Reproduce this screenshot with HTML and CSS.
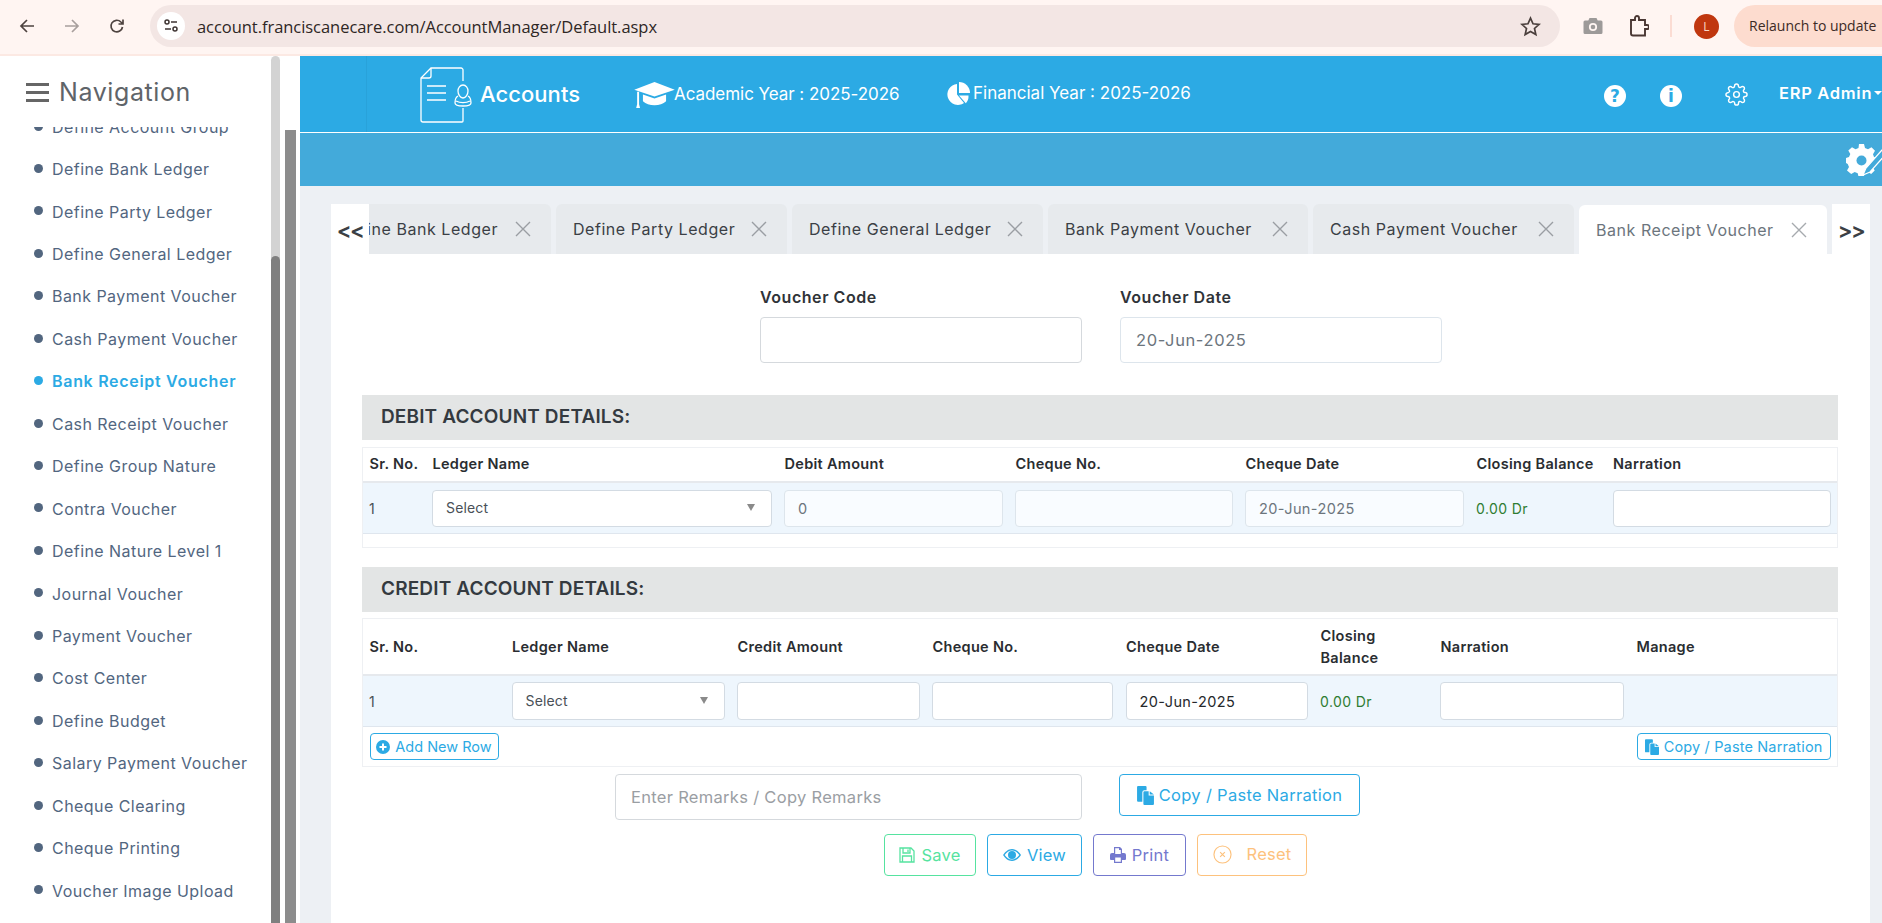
FILE: index.html
```html
<!DOCTYPE html>
<html lang="en">
<head>
<meta charset="utf-8">
<title>Accounts</title>
<link rel="stylesheet" href="styles.css">
</head>
<body>
<div class="chrome">
  <svg class="ci back" viewBox="0 0 16 16"><path d="M15 8H2M8 2L2 8l6 6"/></svg>
  <svg class="ci fwd" viewBox="0 0 16 16"><path d="M1 8h13M8 2l6 6-6 6"/></svg>
  <svg class="ci reload" viewBox="0 0 16 16"><path d="M13.5 9a5.8 5.8 0 1 1-1.6-5L14 6M14 1.5V6H9.5"/></svg>
  <div class="omni">
    <span class="tune"><svg viewBox="0 0 16 16"><circle cx="4" cy="4" r="2"/><path d="M8 4h6M2 11h6"/><circle cx="12" cy="11" r="2"/></svg></span>
    <span class="url">account.franciscanecare.com/AccountManager/Default.aspx</span>
    <svg class="star" viewBox="0 0 20 20"><path d="M10 2l2.4 5.4 5.8.6-4.4 3.9 1.3 5.8L10 14.700l-5.100 3 1.300-5.800L1.800 8l5.800-.6z"/></svg>
  </div>
  <svg class="cam" viewBox="0 0 20 18"><path d="M6.500 1h7l1.200 2.500H18a1.500 1.500 0 0 1 1.500 1.500v10.500A1.500 1.500 0 0 1 18 17H2a1.500 1.500 0 0 1-1.500-1.500V5A1.500 1.500 0 0 1 2 3.500h3.300z"/><circle cx="10" cy="10" r="3.200" class="camhole"/></svg>
  <svg class="puzzle" viewBox="0 0 20 22"><path d="M2 5h4V3a2 2 0 0 1 4 0v2h6v5h2a2 2 0 0 1 0 4h-2v6.500H4a2 2 0 0 1-2-2z"/></svg>
  <span class="csep"></span>
  <span class="avatar">L</span>
  <span class="relaunch">Relaunch to update</span>
</div>

<div class="app">
  <aside class="sidebar">
    <div class="navhead">
      <span class="burger"><i></i><i></i><i></i></span>
      <span class="navtitle">Navigation</span>
    </div>
    <div class="navclip">
      <ul class="navlist">
        <li>Define Account Group</li>
        <li>Define Bank Ledger</li>
        <li>Define Party Ledger</li>
        <li>Define General Ledger</li>
        <li>Bank Payment Voucher</li>
        <li>Cash Payment Voucher</li>
        <li class="active">Bank Receipt Voucher</li>
        <li>Cash Receipt Voucher</li>
        <li>Define Group Nature</li>
        <li>Contra Voucher</li>
        <li>Define Nature Level 1</li>
        <li>Journal Voucher</li>
        <li>Payment Voucher</li>
        <li>Cost Center</li>
        <li>Define Budget</li>
        <li>Salary Payment Voucher</li>
        <li>Cheque Clearing</li>
        <li>Cheque Printing</li>
        <li>Voucher Image Upload</li>
      </ul>
    </div>
  </aside>
  <div class="sbar1"><div class="sbar1-thumb"></div></div>
  <div class="sbar2gap"><div class="sbar2"></div></div>

  <main class="main">
    <header class="topbar">
      <div class="brandcell"></div>
      <svg class="logo" viewBox="0 0 52 56"><path d="M43 14V3a2 2 0 0 0-2-2H11L1 11v42a2 2 0 0 0 2 2h39a1 1 0 0 0 1-1V41"/><path d="M11 1v8a2 2 0 0 1-2 2H1"/><path d="M7 19h19M7 26h19M7 33h19"/><path d="M43 18c3 0 5 3 5 6s-2 7-5 7-5-4-5-7 2-6 5-6zM38 29c-2 1-3 3-3 7 0 2 3 3 8 3s8-1 8-3c0-4-1-6-3-7M36 34c4 2 10 2 14 0"/></svg>
      <span class="brand">Accounts</span>
      <svg class="cap" viewBox="0 0 42 28"><path d="M21 0L42 8 21 15 0 8zM9 13l12 4 12-4v7c-3 3-7 4-12 4s-9-1-12-4z"/><path d="M3 10h2v13l1 4H2l1-4z"/></svg>
      <span class="year">Academic Year : 2025-2026</span>
      <svg class="pie" viewBox="0 0 24 24"><path d="M11 2v10.500l7 8.500A10.500 10.500 0 1 1 11 2z"/><path d="M13 0a11 11 0 0 1 11 11H13z"/><path d="M13 13.500l6.800 7.800a10.500 10.500 0 0 0 2.700-7.800z"/></svg>
      <span class="year fin">Financial Year : 2025-2026</span>
      <svg class="hic help" viewBox="0 0 22 22"><circle cx="11" cy="11" r="11"/><text x="11" y="16.500" class="hictext">?</text></svg>
      <svg class="hic info" viewBox="0 0 22 22"><circle cx="11" cy="11" r="11"/><text x="11" y="17" class="hictext">i</text></svg>
      <svg class="gearo" viewBox="0 0 24 24"><circle cx="12" cy="12" r="3"/><path d="M19.400 15a1.650 1.650 0 0 0 .33 1.820l.06.06a2 2 0 0 1 0 2.830 2 2 0 0 1-2.830 0l-.06-.06a1.650 1.650 0 0 0-1.820-.33 1.650 1.650 0 0 0-1 1.510V21a2 2 0 0 1-2 2 2 2 0 0 1-2-2v-.09A1.650 1.650 0 0 0 9 19.400a1.650 1.650 0 0 0-1.820.33l-.06.06a2 2 0 0 1-2.830 0 2 2 0 0 1 0-2.830l.06-.06a1.650 1.650 0 0 0 .33-1.820 1.650 1.650 0 0 0-1.510-1H3a2 2 0 0 1-2-2 2 2 0 0 1 2-2h.09A1.650 1.650 0 0 0 4.600 9a1.650 1.650 0 0 0-.33-1.820l-.06-.06a2 2 0 0 1 0-2.830 2 2 0 0 1 2.830 0l.06.06a1.650 1.650 0 0 0 1.820.33H9a1.650 1.650 0 0 0 1-1.510V3a2 2 0 0 1 2-2 2 2 0 0 1 2 2v.09a1.650 1.650 0 0 0 1 1.510 1.650 1.650 0 0 0 1.820-.33l.06-.06a2 2 0 0 1 2.830 0 2 2 0 0 1 0 2.830l-.06.06a1.650 1.650 0 0 0-.33 1.820V9a1.650 1.650 0 0 0 1.510 1H21a2 2 0 0 1 2 2 2 2 0 0 1-2 2h-.09a1.650 1.650 0 0 0-1.510 1z"/></svg>
      <span class="user">ERP Admin</span>
      <span class="caret"></span>
    </header>
    <div class="band">
      <svg class="bandic" viewBox="0 0 36 32"><path class="bg" d="M13 0h5l1 4 3 1.300 3.500-2 3.500 3.500-2 3.500L28 13l4 1v5l-4 1-1.300 3 2 3.500-3.500 3.500-3.500-2-3 1.300-1 4h-5l-1-4-3-1.300-3.500 2L1 26.500l2-3.500L1.700 20 0 19v-5l3-1 1.300-3-2-3.500L6 3.300l3.500 2 3-1.300z"/><circle class="bh" cx="15.500" cy="16.500" r="5"/><path class="bp" d="M36 6L20 24l-3 7 7-3L40 10z"/></svg>
    </div>

    <div class="content">
      <section class="card">
        <div class="tabs">
          <div class="arrow">&lt;&lt;</div>
          <div class="tabrow">
            <div class="tab t1"><span class="tabtext">Define Bank Ledger</span><svg class="x" viewBox="0 0 16 16"><path d="M1 1l14 14M15 1L1 15"/></svg></div>
            <div class="tab t2"><span class="tabtext">Define Party Ledger</span><svg class="x" viewBox="0 0 16 16"><path d="M1 1l14 14M15 1L1 15"/></svg></div>
            <div class="tab t3"><span class="tabtext">Define General Ledger</span><svg class="x" viewBox="0 0 16 16"><path d="M1 1l14 14M15 1L1 15"/></svg></div>
            <div class="tab t4"><span class="tabtext">Bank Payment Voucher</span><svg class="x" viewBox="0 0 16 16"><path d="M1 1l14 14M15 1L1 15"/></svg></div>
            <div class="tab t5"><span class="tabtext">Cash Payment Voucher</span><svg class="x" viewBox="0 0 16 16"><path d="M1 1l14 14M15 1L1 15"/></svg></div>
            <div class="tab t6 on"><span class="tabtext">Bank Receipt Voucher</span><svg class="x" viewBox="0 0 16 16"><path d="M1 1l14 14M15 1L1 15"/></svg></div>
          </div>
          <div class="arrow">&gt;&gt;</div>
        </div>

        <div class="form">
          <div class="vrow">
            <label class="vfield"><span class="vlabel">Voucher Code</span><input class="ctl big" type="text"></label>
            <label class="vfield"><span class="vlabel">Voucher Date</span><input class="ctl big ro" type="text" value="20-Jun-2025"></label>
          </div>

          <h2 class="shead">DEBIT ACCOUNT DETAILS:</h2>
          <div class="twrap">
            <table class="grid debit">
              <colgroup><col class="d1"><col class="d2"><col class="d3"><col class="d4"><col class="d5"><col class="d6"><col class="d7"></colgroup>
              <thead><tr class="hr1"><th>Sr. No.</th><th>Ledger Name</th><th>Debit Amount</th><th>Cheque No.</th><th>Cheque Date</th><th>Closing Balance</th><th>Narration</th></tr></thead>
              <tbody>
                <tr class="dr"><td>1</td><td><div class="ctl sel"><span>Select</span><span class="tri"></span></div></td><td><input class="ctl ro" type="text" value="0"></td><td><input class="ctl ro" type="text"></td><td><input class="ctl ro" type="text" value="20-Jun-2025"></td><td class="bal">0.00 Dr</td><td><input class="ctl" type="text"></td></tr>
                <tr class="tail"><td colspan="7"></td></tr>
              </tbody>
            </table>
          </div>

          <h2 class="shead second">CREDIT ACCOUNT DETAILS:</h2>
          <div class="twrap cw">
            <table class="grid credit">
              <colgroup><col class="c1"><col class="c2"><col class="c3"><col class="c4"><col class="c5"><col class="c6"><col class="c7"><col class="c8"></colgroup>
              <thead><tr class="hr2"><th>Sr. No.</th><th>Ledger Name</th><th>Credit Amount</th><th>Cheque No.</th><th>Cheque Date</th><th>Closing<br>Balance</th><th>Narration</th><th>Manage</th></tr></thead>
              <tbody>
                <tr class="dr"><td>1</td><td><div class="ctl sel"><span>Select</span><span class="tri"></span></div></td><td><input class="ctl" type="text"></td><td><input class="ctl" type="text"></td><td><input class="ctl dark" type="text" value="20-Jun-2025"></td><td class="bal">0.00 Dr</td><td><input class="ctl" type="text"></td><td></td></tr>
                <tr class="tools"><td colspan="8"><div class="toolrow">
                  <button class="btn sm addrow"><svg class="bi" viewBox="0 0 14 14"><circle cx="7" cy="7" r="7" fill="currentColor"/><path d="M7 3.500v7M3.500 7h7" stroke="#fff" stroke-width="2"/></svg>Add New Row</button>
                  <button class="btn sm"><svg class="bi files" viewBox="0 0 16 18"><path fill="currentColor" d="M0 1a1 1 0 0 1 1-1h7a1 1 0 0 1 1 1v3H7a2 2 0 0 0-2 2v9H1a1 1 0 0 1-1-1z"/><path fill="currentColor" d="M7 5h4v4h5v8a1 1 0 0 1-1 1H7a1 1 0 0 1-1-1V6a1 1 0 0 1 1-1zM12 5l4 3h-4z"/></svg>Copy / Paste Narration</button>
                </div></td></tr>
              </tbody>
            </table>
          </div>

          <div class="remarks">
            <input class="ctl big rem" type="text" placeholder="Enter Remarks / Copy Remarks">
            <button class="btn copyb"><svg class="bi files lg" viewBox="0 0 16 18"><path fill="currentColor" d="M0 1a1 1 0 0 1 1-1h7a1 1 0 0 1 1 1v3H7a2 2 0 0 0-2 2v9H1a1 1 0 0 1-1-1z"/><path fill="currentColor" d="M7 5h4v4h5v8a1 1 0 0 1-1 1H7a1 1 0 0 1-1-1V6a1 1 0 0 1 1-1zM12 5l4 3h-4z"/></svg>Copy / Paste Narration</button>
          </div>

          <div class="actions">
            <button class="btn act save"><svg class="ai" viewBox="0 0 16 16"><path d="M1 1h11l3 3v11H1zM4 1v5h7V1M9 2.500V5M3.500 15V9h9v6" fill="none" stroke="currentColor" stroke-width="1.300"/></svg>Save</button>
            <button class="btn act view"><svg class="ai eye" viewBox="0 0 18 14"><path fill="currentColor" fill-rule="evenodd" d="M9 1c4 0 7 3 9 6-2 3-5 6-9 6s-7-3-9-6c2-3 5-6 9-6zM1.700 7c1.800 2.500 4.200 4.500 7.300 4.500S14.500 9.500 16.300 7C14.500 4.500 12.100 2.500 9 2.500S3.500 4.500 1.700 7zM9 3a4 4 0 1 1 0 8 4 4 0 0 1 0-8z"/></svg>View</button>
            <button class="btn act print"><svg class="ai" viewBox="0 0 16 16"><path fill="currentColor" fill-rule="evenodd" d="M4 0h6l2 2v4h2a2 2 0 0 1 2 2v4a1 1 0 0 1-1 1h-3v3H4v-3H1a1 1 0 0 1-1-1V8a2 2 0 0 1 2-2h2zM5.200 1.200V7h5.600V3H9V1.200zM5.200 10.500v4.300h5.600v-4.300z"/></svg>Print</button>
            <button class="btn act reset"><svg class="ai rs" viewBox="0 0 20 20"><circle cx="10" cy="10" r="9" fill="none" stroke="currentColor" stroke-width="1.200"/><path d="M7.500 7.500l5 5M12.500 7.500l-5 5" stroke="currentColor" stroke-width="1.200"/></svg>Reset</button>
          </div>
        </div>
      </section>
    </div>
  </main>
</div>
</body>
</html>
```
FILE: styles.css
```css
* { box-sizing: border-box; }
html, body { margin: 0; padding: 0; height: 923px; overflow: hidden; background: #fff; }
body { font-family: Inter, "Open Sans", sans-serif; color: #343a40; }

/* browser bar */
.chrome { height: 56px; display: flex; align-items: center; background: #fff5f2; border-bottom: 2px solid #fce9e3; padding-bottom: 2px; position: relative; overflow: hidden; }
.ci { width: 16px; height: 16px; fill: none; stroke: #4e4340; stroke-width: 1.700; flex: none; }
.back { margin-left: 19px; }
.fwd { margin-left: 29px; stroke: #a89f9d; }
.reload { margin-left: 29px; }
.omni { margin-left: 25px; width: 1410px; flex: none; height: 42px; border-radius: 21px; background: #f3e6e4; display: flex; align-items: center; padding-left: 7px; }
.tune { width: 28px; height: 28px; border-radius: 50%; background: #fff; display: flex; align-items: center; justify-content: center; }
.tune svg { width: 16px; height: 16px; fill: none; stroke: #3f3533; stroke-width: 1.500; }
.url { margin-left: 12px; font-family: "Open Sans", sans-serif; font-size: 16.500px; letter-spacing: -.05px; color: #2e2725; flex: 1; }
.star { width: 21px; height: 21px; fill: none; stroke: #4a3f3c; stroke-width: 1.600; margin-right: 19px; }
.cam { width: 20px; height: 18px; margin-left: 23px; fill: #9d9a99; flex: none; }
.camhole { fill: none; stroke: #fff5f2; stroke-width: 1.800; }
.puzzle { width: 20px; height: 22px; margin-left: 26px; fill: none; stroke: #4a3733; stroke-width: 1.900; flex: none; }
.csep { width: 2px; height: 22px; background: #fbdcd3; margin-left: 21px; flex: none; }
.avatar { width: 25px; height: 25px; border-radius: 50%; background: #c0370f; color: #fbd9c9; font: 12px/25px "Open Sans", sans-serif; text-align: center; margin-left: 22px; flex: none; }
.relaunch { margin-left: 15px; height: 42px; width: 170px; flex: none; padding-left: 15px; border-radius: 21px 0 0 21px; background: #fddccf; color: #3c2a25; font: 14px/42px "Open Sans", sans-serif; white-space: nowrap; }

/* shell */
.app { display: flex; height: 867px; }
.sidebar { width: 271px; flex: none; display: flex; flex-direction: column; background: #fff; }
.navhead { height: 71px; flex: none; display: flex; align-items: center; padding: 1px 0 0 26px; }
.burger { width: 23px; display: flex; flex-direction: column; gap: 5px; }
.burger i { display: block; height: 3px; background: #666; }
.navtitle { margin-left: 10px; font-size: 25px; color: #5f6469; letter-spacing: .6px; }
.navclip { flex: 1; overflow: hidden; }
.navlist { list-style: none; margin: -21.500px 0 0; padding: 0; }
.navlist li { height: 42.450px; display: flex; align-items: center; padding-left: 52px; position: relative; font-size: 16px; color: #52667f; letter-spacing: .45px; white-space: nowrap; }
.navlist li::before { content: ""; position: absolute; left: 34px; top: 16px; width: 9px; height: 9px; border-radius: 50%; background: #52667f; }
.navlist li.active { color: #2caae4; font-weight: 600; letter-spacing: .7px; }
.navlist li.active::before { background: #2caae4; }
.sbar1 { width: 9px; flex: none; background: #d3d3d3; border-radius: 5px 5px 0 0; padding-top: 200px; }
.sbar1-thumb { height: 100%; background: #7f7f7f; border-radius: 5px 5px 0 0; }
.sbar2gap { width: 20px; flex: none; padding: 74px 4px 0 5px; }
.sbar2 { height: 100%; background: #8c8c8c; }

.main { flex: 1; min-width: 0; display: flex; flex-direction: column; background: #edf0f4; }
.topbar { height: 77px; flex: none; background: #2caae4; border-bottom: 1px solid #fff; display: flex; align-items: center; position: relative; color: #fff; overflow: hidden; }
.brandcell { width: 67px; align-self: stretch; border-right: 1px solid #29a2da; flex: none; }
.logo { width: 52px; height: 56px; margin-left: 53px; fill: none; stroke: #fff; stroke-width: 1.300; flex: none; margin-top: 1px; }
.brand { font-size: 22px; font-weight: 500; margin-left: 8px; width: 154px; flex: none; letter-spacing: .05px; }
.cap { width: 41px; height: 27px; fill: #fff; flex: none; margin-top: 3px; }
.year { font-size: 17px; margin-left: -1px; letter-spacing: -.05px; width: 272px; flex: none; white-space: nowrap; }
.pie { width: 24px; height: 24px; fill: #fff; flex: none; }
.fin { margin-left: 3px; width: 250px; margin-top: -3px; letter-spacing: 0; }
.hic { width: 22px; height: 22px; flex: none; fill: #fff; margin-top: 3px; }
.hictext { font-size: 17px; font-weight: 800; fill: #2caae4; text-anchor: middle; font-family: "DejaVu Sans", sans-serif; }
.help { margin-left: 381px; }
.info { margin-left: 34px; }
.gearo { width: 23px; height: 23px; fill: none; stroke: #fff; stroke-width: 1.500; flex: none; margin-left: 43px; }
.user { margin-left: 31px; font-size: 16.500px; font-weight: 600; white-space: nowrap; letter-spacing: .7px; margin-top: -3px; flex: none; }
.caret { border: 4px solid transparent; border-top-color: #fff; border-bottom: 0; margin-left: 2px; flex: none; margin-top: -3px; }
.band { height: 53px; flex: none; background: #43aada; display: flex; align-items: center; justify-content: flex-end; overflow: hidden; }
.bandic { width: 36px; height: 32px; flex: none; }
.bandic .bg { fill: #fff; }
.bandic .bh { fill: #43aada; }
.bandic .bp { fill: #43aada; stroke: #fff; stroke-width: 1.200; }

/* card */
.content { flex: 1; padding: 18px 12px 0 31px; min-height: 0; }
.card { background: #fff; height: 100%; }
.tabs { display: flex; height: 50px; }
.arrow { width: 38px; flex: none; display: flex; align-items: center; justify-content: center; font-size: 22px; color: #3b3f45; font-weight: 600; letter-spacing: -1.500px; padding-top: 2px; }
.tabrow { display: flex; gap: 5px; flex: 1; overflow: hidden; background: #edf0f4; }
.tab { height: 50px; background: #e7eaed; border-radius: 6px 6px 0 0; display: flex; align-items: center; overflow: hidden; flex: none; padding-left: 17px; font-size: 16px; color: #3b3f45; white-space: nowrap; letter-spacing: .55px; }
.tabtext { flex: 1; }
.x { width: 16px; height: 16px; fill: none; stroke: #9a9ea3; stroke-width: 1.400; margin: 0 20px 0 0; flex: none; }
.t1 { width: 182px; justify-content: flex-end; padding-left: 0; border-radius: 0 6px 0 0; }
.t1 .tabtext { flex: none; margin-right: 17px; }
.t2 { width: 231px; }
.t3 { width: 251px; }
.t4 { width: 260px; }
.t5 { width: 261px; }
.t6 { width: 248px; }
.tab.on { background: #fff; color: #6c757d; margin-top: 1px; height: 49px; }
.tab.on .x { stroke: #a6aaae; }

.form { padding: 33px 32px 0 31px; }
.vrow { display: flex; gap: 38px; padding-left: 398px; }
.vfield { display: block; width: 322px; }
.vlabel { display: block; font-size: 16px; font-weight: 600; line-height: 20px; margin-bottom: 10px; color: #2f3338; letter-spacing: .55px; }
.ctl { display: block; width: 100%; height: 37px; font: 14.500px Inter, sans-serif; color: #495057; border: 1px solid #d3dbe3; border-radius: 4px; background: #fff; padding: 0 13px; outline: 0; letter-spacing: .4px; }
.ctl.big { height: 46px; font-size: 16.500px; padding: 0 15px; color: #6c757d; border-color: #d5d9dd; letter-spacing: .6px; }
.ctl.rem { letter-spacing: .3px; }
.ctl.ro { background: #f9fcff; color: #6c757d; border-color: #dde5ec; }
.ctl.big.ro { background: #fff; }
.ctl.dark { color: #25282b; }
.ctl::placeholder { color: #9a9ea3; opacity: 1; }
.sel { display: flex; align-items: center; justify-content: space-between; padding: 0 16px 2px 13px; color: #495057; font-size: 14px; letter-spacing: .15px; }
.tri { border: 4px solid transparent; border-top: 7px solid #8a8a8a; border-bottom: 0; }
.shead { margin: 32px 0 0; height: 45px; background: #e3e5e5; padding-left: 19px; font-size: 19px; font-weight: 600; line-height: 44px; color: #343a40; letter-spacing: .15px; }
.shead.second { margin-top: 19px; }
.twrap { margin-top: 7px; width: 1476px; border: 1px solid #eef0f3; }
.twrap.cw { margin-top: 6px; }
.grid { width: 1474px; table-layout: fixed; border-collapse: separate; border-spacing: 0; font-size: 14px; }
.grid th { text-align: left; padding: 0 0 0 6.500px; font-size: 14.500px; font-weight: 600; color: #2a2d31; line-height: 22px; border-bottom: 2px solid #e6e9ed; letter-spacing: .3px; white-space: nowrap; }
.debit th { padding-bottom: 2px; }
.grid td { padding: 0 6.500px 0 6px; }
.hr1 { height: 35px; }
.hr2 { height: 57px; }
.dr td { height: 51px; background: #eef6fd; border-bottom: 1px solid #dfe6ee; color: #4a4f55; }
.grid .bal { color: #2e7d32; letter-spacing: .4px; }
.credit .ctl { height: 38px; }
.tail td { height: 13px; }
.grid .tools td { height: 39px; padding: 6px 6.500px 0 6.500px; vertical-align: top; }
.toolrow { display: flex; justify-content: space-between; }
.d1 { width: 63px; } .d2 { width: 352px; } .d3 { width: 231px; } .d4 { width: 230px; } .d5 { width: 231px; } .d6 { width: 136.500px; } .d7 { width: 230.500px; }
.c1 { width: 142.500px; } .c2 { width: 225.500px; } .c3 { width: 195px; } .c4 { width: 193.500px; } .c5 { width: 194.500px; } .c6 { width: 120px; } .c7 { width: 196px; } .c8 { width: 207px; }

.btn { display: inline-flex; align-items: center; justify-content: center; background: #fff; border: 1px solid #2caae4; color: #2caae4; border-radius: 4px; font-family: Inter, sans-serif; padding: 0; white-space: nowrap; }
.sm { height: 27px; font-size: 14.500px; padding: 0 7px; letter-spacing: .15px; }
.addrow { width: 129px; padding: 0; letter-spacing: 0; }
.bi { width: 14px; height: 14px; margin-right: 5px; flex: none; }
.bi.files { height: 16px; }
.remarks { display: flex; padding: 7px 0 0 253px; align-items: flex-start; }
.rem { width: 467px; height: 47px; }
.copyb { width: 241px; height: 42px; margin-left: 37px; font-size: 16.500px; letter-spacing: .3px; }
.bi.lg { width: 17px; height: 19px; margin-right: 5px; }
.actions { display: flex; gap: 11px; padding: 14px 0 0 522px; }
.act { height: 42px; font-size: 16.500px; letter-spacing: .25px; }
.ai { width: 16px; height: 16px; margin-right: 6px; flex: none; }
.save { width: 92px; border-color: #56e3a0; color: #56e3a0; }
.view { width: 95px; }
.print { width: 93px; border-color: #7479ce; color: #7479ce; }
.reset { width: 110px; border-color: #fdc27d; color: #fdc27d; padding-bottom: 2px; }
.rs { width: 19px; height: 19px; margin-right: 15px; }
.eye { width: 18px; height: 14px; }
```
